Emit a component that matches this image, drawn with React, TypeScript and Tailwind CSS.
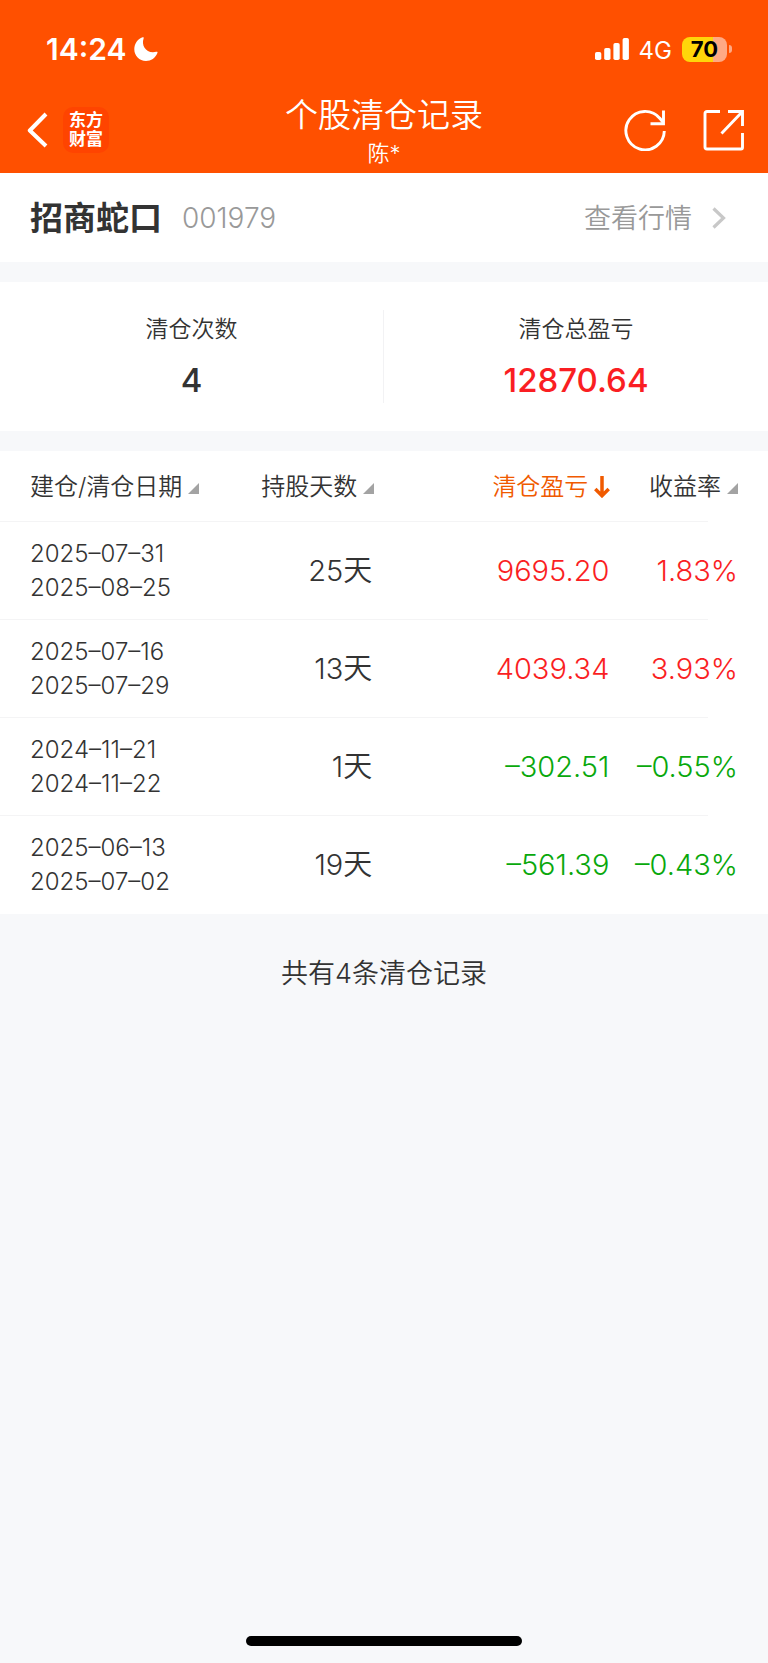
type RecordRow = {
  opened: string;
  closed: string;
  days: number;
  profit: string;
  rate: string;
  gain: boolean;
};

const records: RecordRow[] = [
  { opened: "2025–07–31", closed: "2025–08–25", days: 25, profit: "9695.20", rate: "1.83%", gain: true },
  { opened: "2025–07–16", closed: "2025–07–29", days: 13, profit: "4039.34", rate: "3.93%", gain: true },
  { opened: "2024–11–21", closed: "2024–11–22", days: 1, profit: "–302.51", rate: "–0.55%", gain: false },
  { opened: "2025–06–13", closed: "2025–07–02", days: 19, profit: "–561.39", rate: "–0.43%", gain: false },
];

function StatusBar() {
  return (
    <div className="flex h-[98px] items-center justify-between pr-9 pl-[46px]">
      <div className="flex items-center gap-2">
        <span className="text-[30px] leading-9 font-semibold">14:24</span>
        <svg className="h-6 w-6" viewBox="0 0 24 24" fill="currentColor" aria-hidden="true">
          <path d="M8.6.3C9.5 0 10 .5 9.6 1.4 7 8.500 12.500 17.300 22.300 14.800c1-.2 1.500.3 1.100 1.200C21.500 21 17 24 12 24 5.300 24 .3 18.900.3 12.300.3 6.800 3.700 2 8.600.3z" />
        </svg>
      </div>
      <div className="flex items-center gap-[10px]">
        <svg className="h-[22px] w-[34px]" viewBox="0 0 34 22" fill="currentColor" aria-hidden="true">
          <rect x="0" y="14" width="6.300" height="8" rx="1.800" />
          <rect x="9.200" y="10" width="6.300" height="12" rx="1.800" />
          <rect x="18.400" y="5" width="6.300" height="17" rx="1.800" />
          <rect x="27.600" y="0" width="6.300" height="22" rx="1.800" />
        </svg>
        <span className="pt-1 text-2xl leading-8">4G</span>
        <div className="flex items-center gap-[2px]">
          <div className="flex h-[25px] w-[45px] items-center justify-center rounded-lg bg-linear-to-r from-[#ffd60a] from-70% to-[#ffa984] to-70%">
            <span className="text-[22px] leading-6 font-bold text-black">70</span>
          </div>
          <span className="h-2 w-[3px] rounded-r-full bg-[#ffa984]" />
        </div>
      </div>
    </div>
  );
}

function NavBar() {
  return (
    <div className="grid h-[75px] grid-cols-[1fr_auto_1fr] items-start">
      <div className="flex items-center gap-[15px] pt-[9px] pl-[27px]">
        <button type="button" aria-label="返回">
          <svg className="h-[36px] w-[21px]" viewBox="0 0 21 36" fill="none" stroke="currentColor" strokeWidth="4" aria-hidden="true">
            <path d="M19 2 2.800 18.500 19 34" strokeLinejoin="round" />
          </svg>
        </button>
        <a
          href="#home"
          className="grid h-[46px] w-[46px] place-content-center rounded-[10px] bg-[#ff4400] text-center text-[17px] leading-[19px] font-bold"
        >
          <span>东方</span>
          <span>财富</span>
        </a>
      </div>
      <div className="text-center">
        <h1 className="text-[33px] leading-[34px] font-[350]">个股清仓记录</h1>
        <p className="pt-[7px] text-[22px] leading-7 font-[350]">陈*</p>
      </div>
      <div className="flex items-center justify-end gap-9 pt-[11px] pr-6">
        <button type="button" aria-label="刷新">
          <svg className="h-[42px] w-[42px]" viewBox="0 0 42 42" fill="none" stroke="currentColor" strokeWidth="2.900" aria-hidden="true">
            <path d="M40.300 22A19.200 19.200 0 1 1 36 9.500L39.500 13.800" />
            <path d="M39.500 1.500v13.200H26.500" />
          </svg>
        </button>
        <button type="button" aria-label="分享">
          <svg className="h-[42px] w-[42px]" viewBox="0 0 42 42" fill="none" stroke="currentColor" strokeWidth="2.900" aria-hidden="true">
            <path d="M18 2.500H5a2 2 0 0 0-2 2V38a2 2 0 0 0 2 2h34a1.500 1.500 0 0 0 1.500-1.500V24" />
            <path d="M26 2.500H40.500V17M40.500 2.500 19.500 24.500" />
          </svg>
        </button>
      </div>
    </div>
  );
}

function SortCorner() {
  return (
    <svg className="mt-1 h-[11px] w-[11px]" viewBox="0 0 11 11" aria-hidden="true">
      <path d="M11 0v11H0z" fill="#a3a3a3" />
    </svg>
  );
}

function SortButton({ label, active = false }: { label: string; active?: boolean }) {
  return (
    <button
      type="button"
      className={
        active
          ? "inline-flex items-center gap-1.5 whitespace-nowrap text-[#f05a00]"
          : "inline-flex items-center gap-1.5 whitespace-nowrap"
      }
    >
      {label}
      {active ? (
        <svg className="h-[22px] w-4" viewBox="0 0 16 22" fill="none" stroke="currentColor" strokeWidth="3.500" aria-hidden="true">
          <path d="M8 0v20M1.300 13 8 19.700 14.700 13" />
        </svg>
      ) : (
        <SortCorner />
      )}
    </button>
  );
}

const rule =
  "relative after:absolute after:bottom-0 after:left-0 after:right-[60px] after:h-px after:bg-[#f4f4f5]";

export default function App() {
  return (
    <div className="flex min-h-screen flex-col bg-[#f7f8fa] font-['Inter','Noto_Sans_CJK_SC',sans-serif] text-[#333333]">
      <header className="bg-[#ff5000] text-white">
        <StatusBar />
        <NavBar />
      </header>

      <main className="flex flex-1 flex-col">
        <section className="flex h-[89px] items-center justify-between bg-white pr-[42px] pl-[30px]">
          <div className="flex items-center gap-5">
            <h2 className="text-[33px] leading-10 font-bold">招商蛇口</h2>
            <span className="text-[28px] leading-10 font-light text-[#999999]">001979</span>
          </div>
          <a href="#quote" className="flex items-center gap-5 text-[27px] leading-10 font-[350] text-[#999999]">
            <span className="pt-0.5">查看行情</span>
            <svg className="h-[22px] w-[14px]" viewBox="0 0 14 22" fill="none" stroke="#c8c8c8" strokeWidth="3.200" aria-hidden="true">
              <path d="M1.500 1.500 11.500 11l-10 9.500" />
            </svg>
          </a>
        </section>

        <section className="mt-5 grid h-[149px] grid-cols-2 bg-white py-7 text-center">
          <div className="border-r border-[#f2f2f4]">
            <p className="text-[23px] leading-[38px] font-[350]">清仓次数</p>
            <p className="pt-3 text-[33px] leading-10 font-medium">4</p>
          </div>
          <div>
            <p className="text-[23px] leading-[38px] font-[350]">清仓总盈亏</p>
            <p className="pt-3 text-[33px] leading-10 font-medium text-[#fa1e23]">12870.64</p>
          </div>
        </section>

        <table className="mt-5 w-full table-fixed bg-white">
          <thead>
            <tr className={`${rule} h-[71px] text-2xl`}>
              <th scope="col" className="w-[32%] pl-[30px] text-left font-[350]">
                <SortButton label="建仓/清仓日期" />
              </th>
              <th scope="col" className="w-[17%] pr-0.5 text-right font-[350]">
                <SortButton label="持股天数" />
              </th>
              <th scope="col" className="w-[31%] pr-1 text-right font-[350]">
                <SortButton label="清仓盈亏" active />
              </th>
              <th scope="col" className="w-[20%] pr-[30px] text-right font-[350]">
                <SortButton label="收益率" />
              </th>
            </tr>
          </thead>
          <tbody>
            {records.map((r) => (
              <tr key={r.closed} className={`${rule} h-[98px] text-right text-[29px] font-[350] last:after:hidden`}>
                <td className="pl-[30px] text-left text-2xl leading-[34px]">
                  <div>{r.opened}</div>
                  <div>{r.closed}</div>
                </td>
                <td className="pr-1">{r.days}天</td>
                <td className={r.gain ? "pr-[5px] text-[#fa1e23]" : "pr-[5px] text-[#09a80c]"}>{r.profit}</td>
                <td className={r.gain ? "pr-[30px] text-[#fa1e23]" : "pr-[30px] text-[#09a80c]"}>{r.rate}</td>
              </tr>
            ))}
          </tbody>
        </table>

        <p className="pt-10 text-center text-[27px] leading-10 font-[350]">共有4条清仓记录</p>
      </main>

      <footer className="flex justify-center pb-[17px]">
        <div className="h-[10px] w-[36%] rounded-full bg-black" />
      </footer>
    </div>
  );
}
